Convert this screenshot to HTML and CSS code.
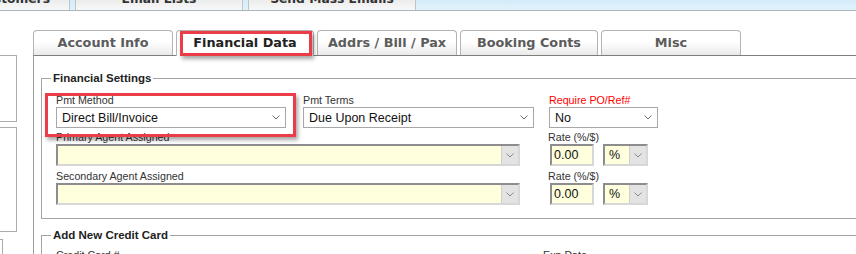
FILE: index.html
```html
<!DOCTYPE html>
<html>
<head>
<meta charset="utf-8">
<link rel="stylesheet" href="styles.css">
</head>
<body>
<div class="topbar">
  <div class="ttab first"><span>Customers</span></div>
  <div class="ttab"><span>Email Lists</span></div>
  <div class="ttab"><span>Send Mass Emails</span></div>
</div>
<div class="main">
  <aside class="sidebar">
    <div class="sbox b1"></div>
    <div class="sbox b2"></div>
    <div class="sbox b3"></div>
  </aside>
  <section class="panel">
    <nav class="tabs">
      <div class="tab w140">Account Info</div>
      <div class="tab w138 active">Financial Data<span class="mark mark-tab"></span></div>
      <div class="tab w140">Addrs / Bill / Pax</div>
      <div class="tab w138">Booking Conts</div>
      <div class="tab w140">Misc</div>
    </nav>
    <div class="panel-body">
      <fieldset class="fs">
        <legend>Financial Settings</legend>
        <div class="row">
          <div class="field method">
            <span class="lbl">Pmt Method</span>
            <div class="sel w-method"><span>Direct Bill/Invoice</span>
              <svg class="chev" width="8" height="5" viewBox="0 0 8 5"><polyline points="0.5,0.5 4,4 7.5,0.5" fill="none" stroke="#707070" stroke-width="1"/></svg>
            </div>
            <span class="mark mark-field"></span>
          </div>
          <div class="field terms">
            <span class="lbl">Pmt Terms</span>
            <div class="sel w-terms"><span>Due Upon Receipt</span>
              <svg class="chev" width="8" height="5" viewBox="0 0 8 5"><polyline points="0.5,0.5 4,4 7.5,0.5" fill="none" stroke="#707070" stroke-width="1"/></svg>
            </div>
          </div>
          <div class="field require">
            <span class="lbl red">Require PO/Ref#</span>
            <div class="sel w-req"><span>No</span>
              <svg class="chev" width="8" height="5" viewBox="0 0 8 5"><polyline points="0.5,0.5 4,4 7.5,0.5" fill="none" stroke="#707070" stroke-width="1"/></svg>
            </div>
          </div>
        </div>
        <div class="row r2">
          <div class="field">
            <span class="lbl">Primary Agent Assigned</span>
            <div class="inp w-agent"><span class="btn"><svg width="8" height="5" viewBox="0 0 8 5"><polyline points="0.5,0.5 4,4 7.5,0.5" fill="none" stroke="#8a8a8a" stroke-width="1"/></svg></span></div>
          </div>
          <div class="field rate">
            <span class="lbl">Rate (%/$)</span>
            <div class="rate-row">
              <div class="inp w-rate">0.00</div>
              <div class="inp w-unit">%<span class="btn"><svg width="8" height="5" viewBox="0 0 8 5"><polyline points="0.5,0.5 4,4 7.5,0.5" fill="none" stroke="#8a8a8a" stroke-width="1"/></svg></span></div>
            </div>
          </div>
        </div>
        <div class="row r3">
          <div class="field">
            <span class="lbl">Secondary Agent Assigned</span>
            <div class="inp w-agent"><span class="btn"><svg width="8" height="5" viewBox="0 0 8 5"><polyline points="0.5,0.5 4,4 7.5,0.5" fill="none" stroke="#8a8a8a" stroke-width="1"/></svg></span></div>
          </div>
          <div class="field rate">
            <span class="lbl">Rate (%/$)</span>
            <div class="rate-row">
              <div class="inp w-rate">0.00</div>
              <div class="inp w-unit">%<span class="btn"><svg width="8" height="5" viewBox="0 0 8 5"><polyline points="0.5,0.5 4,4 7.5,0.5" fill="none" stroke="#8a8a8a" stroke-width="1"/></svg></span></div>
            </div>
          </div>
        </div>
      </fieldset>
      <fieldset class="fs fs2">
        <legend>Add New Credit Card</legend>
        <div class="row">
          <span class="lbl cc-num">Credit Card #</span>
          <span class="lbl">Exp Date</span>
        </div>
      </fieldset>
    </div>
  </section>
</div>
</body>
</html>
```

FILE: styles.css
```css
* { box-sizing: border-box; }
html, body { margin: 0; padding: 0; }
body {
  width: 856px;
  height: 254px;
  overflow: hidden;
  background: #fff;
  font-family: "Liberation Sans", Arial, sans-serif;
  color: #333;
}

/* top menu strip */
.topbar {
  display: flex;
  gap: 5px;
  height: 11px;
  border-bottom: 1px solid #a9b4bc;
  background: linear-gradient(#d4ecf9, #e2f2fc);
  overflow: hidden;
}
.ttab {
  flex: none;
  width: 168px;
  height: 10px;
  border-left: 1px solid #bcc5cb;
  border-right: 1px solid #bcc5cb;
  background: linear-gradient(#ececec, #f8f8f8);
  display: flex;
  justify-content: center;
  font: bold 12.3px/13px "DejaVu Sans", Verdana, sans-serif;
  color: #333;
  overflow: hidden;
}
.ttab span { margin-top: -7px; white-space: nowrap; }
.ttab.first {
  width: 70px;
  border-left: 0;
  justify-content: flex-end;
  padding-right: 19px;
}

.main { display: flex; }

/* left sidebar stubs */
.sidebar { flex: none; width: 17px; padding-top: 44px; }
.sbox { border: 1px solid #ababab; border-left: 0; }
.b1 { height: 67px; }
.b2 { height: 105px; margin-top: 5px; }
.b3 { height: 40px; width: 3px; margin-top: 7px; border-bottom: 0; }

/* tab panel */
.panel { flex: none; width: 900px; margin-left: 16px; margin-top: 19px; }
.tabs { display: flex; gap: 3px; height: 25px; align-items: flex-start; }
.tab {
  flex: none;
  position: relative;
  height: 25px;
  border: 1px solid #b3b3b3;
  border-bottom: 0;
  border-radius: 4px 4px 0 0;
  background: linear-gradient(#fff 45%, #eaeaea);
  text-align: center;
  font: bold 12.8px/24px "DejaVu Sans", Verdana, sans-serif;
  color: #5b5b5b;
  white-space: nowrap;
}
.w140 { width: 140px; }
.w138 { width: 138px; }
.tab.active {
  background: #fff;
  color: #222;
  height: 26px;
  margin-bottom: -1px;
  z-index: 1;
}

.mark {
  position: absolute;
  border: 3px solid #ec3c47;
  box-shadow: 2px 3px 4px rgba(0, 0, 0, 0.35);
  pointer-events: none;
  z-index: 2;
}
.mark-tab { left: 3px; top: 0; width: 132px; height: 25px; }
.mark-field { left: -11px; top: -1px; width: 251px; height: 44px; }

.panel-body {
  border-top: 1px solid #7e7e7e;
  border-left: 1px solid #9c9c9c;
  padding: 16px 0 0 7px;
  height: 300px;
}

fieldset.fs {
  margin: 0;
  border: 1px solid #a4a4a4;
  padding: 9px 0 13px 14px;
  min-width: 0;
}
.fs legend {
  margin-left: -5px;
  padding: 0 2px;
  font: bold 11.5px/13px "Liberation Sans", Arial, sans-serif;
  color: #222;
}
fieldset.fs2 { margin-top: 10px; padding-top: 7px; }

.row { display: flex; align-items: flex-start; }
.r2 { margin-top: 3px; }
.r3 { margin-top: 4px; }

.field { display: flex; flex-direction: column; }
.method { position: relative; }
.terms { margin-left: 17px; }
.require { margin-left: 15px; }
.rate { margin-left: 28px; }
.rate-row { display: flex; gap: 9px; padding-left: 2px; }

.lbl {
  font-size: 10.7px;
  line-height: 13px;
  color: #333;
  white-space: nowrap;
}
.lbl.red { color: #f00; }
.cc-num { width: 487px; }

.sel {
  height: 21px;
  border: 1px solid #a7a7a7;
  background: #fff;
  display: flex;
  align-items: center;
  justify-content: space-between;
  padding: 0 5px 0 5px;
  font-size: 12.5px;
  color: #111;
  white-space: nowrap;
}
.w-method { width: 230px; }
.w-terms { width: 231px; }
.w-req { width: 109px; }

.inp {
  height: 22px;
  border: 2px solid;
  border-color: #8d8d8d #d7d7d7 #d7d7d7 #8d8d8d;
  background: #ffffdd;
  display: flex;
  align-items: center;
  font-size: 12.5px;
  color: #111;
}
.inp .btn {
  margin-left: auto;
  width: 17px;
  align-self: stretch;
  background: #e3e3e3;
  border-left: 1px solid #d0d0d0;
  display: flex;
  align-items: center;
  justify-content: center;
}
.w-agent { width: 464px; }
.w-rate { width: 44px; padding-left: 2px; }
.w-unit { width: 45px; padding-left: 4px; }
```
